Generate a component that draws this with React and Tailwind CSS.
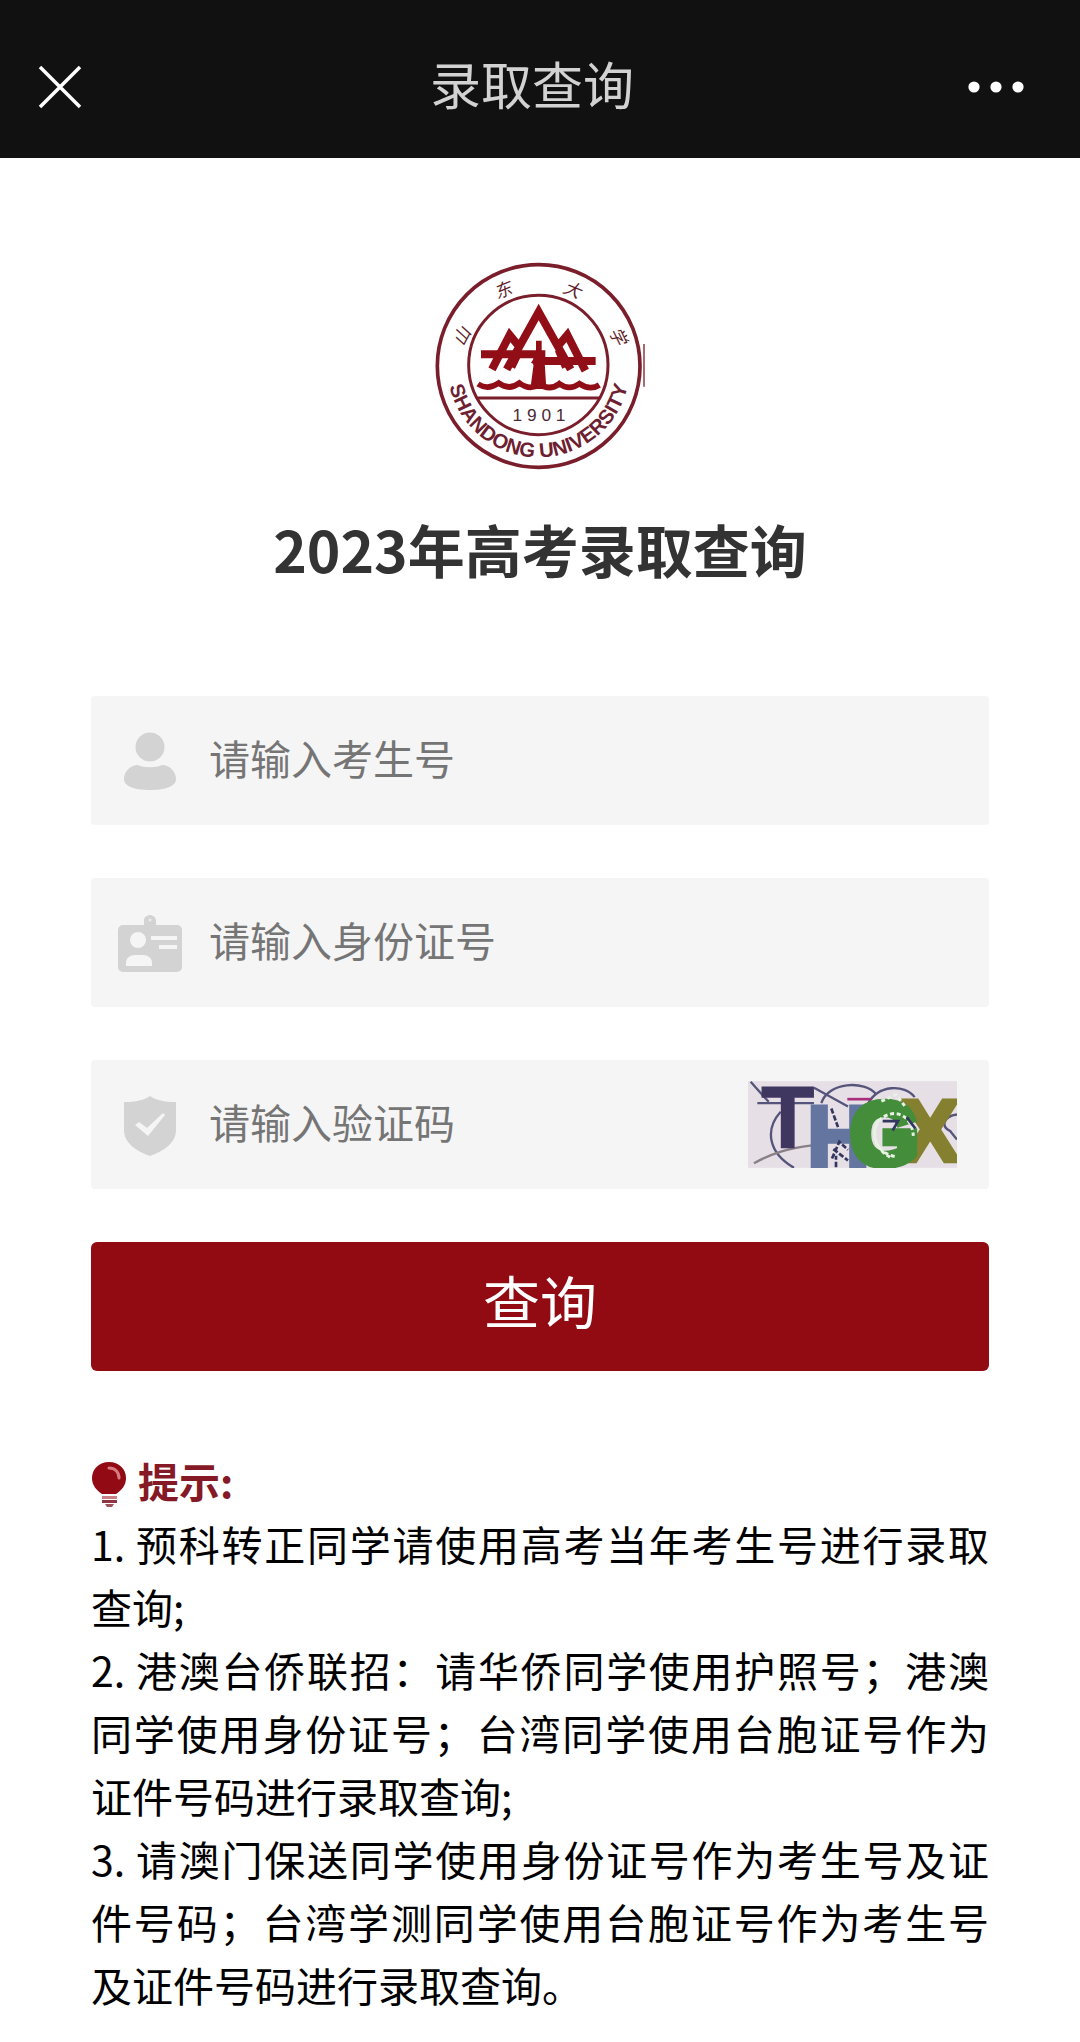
import { useState } from 'react';

const tips = [
  '1. 预科转正同学请使用高考当年考生号进行录取查询;',
  '2. 港澳台侨联招：请华侨同学使用护照号；港澳同学使用身份证号；台湾同学使用台胞证号作为证件号码进行录取查询;',
  '3. 请澳门保送同学使用身份证号作为考生号及证件号码；台湾学测同学使用台胞证号作为考生号及证件号码进行录取查询。',
];

function App() {
  const [form, setForm] = useState({ candidate: '', idCard: '', captcha: '' });

  const update = (name) => (event) => setForm({ ...form, [name]: event.target.value });

  return (
    <div
      lang="zh-CN"
      className="min-h-screen bg-white font-['Noto_Sans_CJK_SC','Noto_Sans',sans-serif] text-black"
    >
      <header className="flex h-[158px] items-center justify-between bg-[#111111] pt-4 pr-[52px] pl-9">
        <button type="button" aria-label="关闭" className="flex w-16 text-white">
          <svg viewBox="0 0 48 48" className="size-12" fill="none" stroke="currentColor" strokeWidth="3.5">
            <path d="M4 4 44 44M44 4 4 44" />
          </svg>
        </button>
        <h1 className="pb-2 text-[51px] leading-[60px] text-[#d2d2d2]">录取查询</h1>
        <button type="button" aria-label="更多" className="flex w-16 justify-end text-white">
          <svg viewBox="0 0 64 16" className="h-4 w-16" fill="currentColor">
            <circle cx="10" cy="8" r="5.6" />
            <circle cx="32" cy="8" r="5.6" />
            <circle cx="54" cy="8" r="5.6" />
          </svg>
        </button>
      </header>

      <main className="px-[91px] pt-[92px] pb-6">
        <Emblem />
        <h2 className="mt-9 text-center text-[57px] leading-[64px] font-bold text-[#333333]">
          2023年高考录取查询
        </h2>

        <form className="mt-[116px] grid gap-[53px]" onSubmit={(event) => event.preventDefault()}>
          <Field
            icon={<UserIcon />}
            label="请输入考生号"
            value={form.candidate}
            onChange={update('candidate')}
          />
          <Field
            icon={<CardIcon />}
            label="请输入身份证号"
            value={form.idCard}
            onChange={update('idCard')}
          />
          <Field
            icon={<ShieldIcon />}
            label="请输入验证码"
            value={form.captcha}
            onChange={update('captcha')}
          >
            <button type="button" aria-label="刷新验证码" className="mr-8 shrink-0">
              <Captcha />
            </button>
          </Field>
          <button
            type="submit"
            className="h-[129px] rounded-md bg-[#930b12] pb-4 text-[57px] leading-[64px] text-white"
          >
            查询
          </button>
        </form>

        <section className="mt-[78px] text-[41px] leading-[63px]">
          <h3 className="flex items-center gap-[11px] font-bold text-[#851a26]">
            <BulbIcon />
            提示:
          </h3>
          {tips.map((tip) => (
            <p key={tip} className="text-justify">
              {tip}
            </p>
          ))}
        </section>
      </main>
    </div>
  );
}

function Field({ icon, label, value, onChange, children }) {
  return (
    <div className="flex h-[129px] items-center rounded-sm bg-[#f5f5f5]">
      <span className="flex w-[118px] shrink-0 justify-center">{icon}</span>
      <input
        type="text"
        aria-label={label}
        placeholder={label}
        value={value}
        onChange={onChange}
        className="h-20 min-w-0 flex-1 bg-transparent pb-2 text-[41px] outline-none placeholder:text-[#757575]"
      />
      {children}
    </div>
  );
}

function UserIcon() {
  return (
    <svg viewBox="0 0 64 64" className="size-16 text-[#d3d3d3]" fill="currentColor" aria-hidden="true">
      <circle cx="32" cy="18" r="14.5" />
      <path d="M20 36c5 3 19 3 24 0 8 0 14 7 14 14 0 8-12 11-26 11S6 58 6 50c0-7 6-14 14-14Z" />
    </svg>
  );
}

function CardIcon() {
  return (
    <svg viewBox="0 0 64 64" className="size-16 text-[#d3d3d3]" aria-hidden="true">
      <path d="M26 15V9q0-3 3-4 3-2 6 0 3 1 3 5v5Z" fill="currentColor" />
      <circle cx="32" cy="9" r="1.5" fill="#ebebeb" />
      <rect y="14" width="64" height="47" rx="5" fill="currentColor" />
      <g fill="#f5f5f5">
        <circle cx="20" cy="29" r="8" />
        <path d="M8 55v-3c0-5 4-8 9-8h8c5 0 9 3 9 8v3Z" />
        <rect x="33" y="25" width="26" height="4" />
        <rect x="41" y="34" width="18" height="4" />
      </g>
    </svg>
  );
}

function ShieldIcon() {
  return (
    <svg viewBox="0 0 64 64" className="size-16 text-[#d3d3d3]" aria-hidden="true">
      <path
        d="M32 3C26 7 18 9 6 9v28c0 13 12 21 26 26 14-5 26-13 26-26V9C46 9 38 7 32 3Z"
        fill="currentColor"
      />
      <path d="m17 32 4-3 8 6 16-15 2 2-17 21Z" fill="#f5f5f5" />
    </svg>
  );
}

function BulbIcon() {
  return (
    <svg viewBox="0 0 36 46" className="mt-1.5 h-[46px] w-9" aria-hidden="true">
      <path d="M18 1C8 1 1 8 1 17c0 7 4 12 10 16h14c6-4 10-9 10-16C35 8 28 1 18 1Z" fill="#920b14" />
      <path d="M18 7c6 0 10 4 10 10" fill="none" stroke="#d77c81" strokeWidth="3" strokeLinecap="round" />
      <path d="M11 35h15v3H11Z" fill="#c97f86" />
      <path d="M11 39h15v3H11Z" fill="#8d3540" />
      <path d="M14 43h9l-2 3h-5Z" fill="#a0525c" />
    </svg>
  );
}

function Captcha() {
  return (
    <svg viewBox="0 0 627 260" className="h-[87px] w-[209px]" aria-hidden="true">
      <rect width="627" height="260" fill="#e6dfe6" />
      <g fill="none" stroke="#55547a" strokeWidth="7">
        <path d="M8 2 62 62M28 66h170M98 92C50 145 60 215 138 260" />
        <path d="M18 246c55-30 100-45 180-54" stroke="#8a7f86" />
        <path d="M198 20 300 76M220 66C240 2 350-4 385 40" />
        <path d="M360 68C390 10 470 8 500 48M627 100c-40 5-50 35-20 50l20 25" />
      </g>
      <g fontFamily="Liberation Sans, sans-serif" fontWeight="700" fontSize="260">
        <text x="40" y="198" fill="#403761" stroke="#403761" strokeWidth="4">
          T
        </text>
        <text x="178" y="258" fill="#64769f" stroke="#64769f" strokeWidth="14">
          H
        </text>
        <text x="460" y="240" fill="#858030" stroke="#858030" strokeWidth="14">
          X
        </text>
        <text x="308" y="250" fill="#438d3b" stroke="#438d3b" strokeWidth="26">
          G
        </text>
      </g>
      <path d="M298 54h70" stroke="#a92d7a" strokeWidth="8" />
      <path
        d="m250 82 20 56M252 232l22-50 26 24M256 204l44 34M264 258v-34"
        fill="none"
        stroke="#33365f"
        strokeWidth="8"
        strokeDasharray="16 6"
      />
      <g fill="none" stroke="#e6f3e2" strokeWidth="9" strokeDasharray="12 8">
        <path d="M440 226c-70-15-80-95-28-122 35-18 80 0 84 60" />
        <path d="M392 116c-25 40-8 90 34 112M400 60l44-20 26 34" />
      </g>
      <path d="M404 120h46l-16 28M476 108l26 34" fill="none" stroke="#33365f" strokeWidth="8" />
    </svg>
  );
}

function Emblem() {
  return (
    <svg viewBox="0 0 720 690" className="mx-auto h-[230px] w-60" role="img" aria-label="山东大学校徽">
      <defs>
        <path id="emblem-arc" d="M82 338V348a274 274 0 0 0 548 0V338" />
      </defs>
      <g fill="none" stroke="#7b1e2b">
        <circle cx="356" cy="348" r="304" strokeWidth="11" />
        <circle cx="355" cy="345" r="209" strokeWidth="9" />
        <path d="M170 444h370" strokeWidth="9" />
        <path d="M672 282v128" strokeWidth="4" />
      </g>

      {/* peaks */}
      <g fill="none" stroke="#920e17" strokeWidth="24">
        <path d="M216 358 269 255 296 288M260 358 356 186 452 358M414 288 442 255 496 362" />
        <path d="M276 352 301 300M414 300 436 352" strokeWidth="20" />
        <path d="M183 313H376M340 333H527" />
      </g>
      <path d="M348 272h17v50h8l6 95h-48l10-75-8-4 15-22Z" fill="#920e17" />

      {/* waves */}
      <path
        d="M174 402q30 20 62-3 32 24 62 0 32 24 60 4 32 20 60-2 30 22 60 0 32 22 60 4"
        fill="none"
        stroke="#920e17"
        strokeWidth="17"
      />

      <g fontFamily="Liberation Sans, sans-serif" fill="#6d2030">
        <text x="357" y="514" fontSize="52" textAnchor="middle" fill="#4a2a35">
          1 9 0 1
        </text>
        <text fontSize="61" fontWeight="700" textAnchor="middle">
          <textPath href="#emblem-arc" startOffset="50%">
            SHANDONG UNIVERSITY
          </textPath>
        </text>
      </g>
      <g
        fontFamily="Noto Sans CJK SC, sans-serif"
        fontSize="52"
        fontStyle="italic"
        textAnchor="middle"
        fill="#5e1c29"
      >
        <text transform="translate(142 268) rotate(-62)">山</text>
        <text transform="translate(256 138) rotate(-22)">东</text>
        <text transform="translate(450 136) rotate(22)">大</text>
        <text transform="translate(578 266) rotate(64)">学</text>
      </g>
    </svg>
  );
}

export default App;
